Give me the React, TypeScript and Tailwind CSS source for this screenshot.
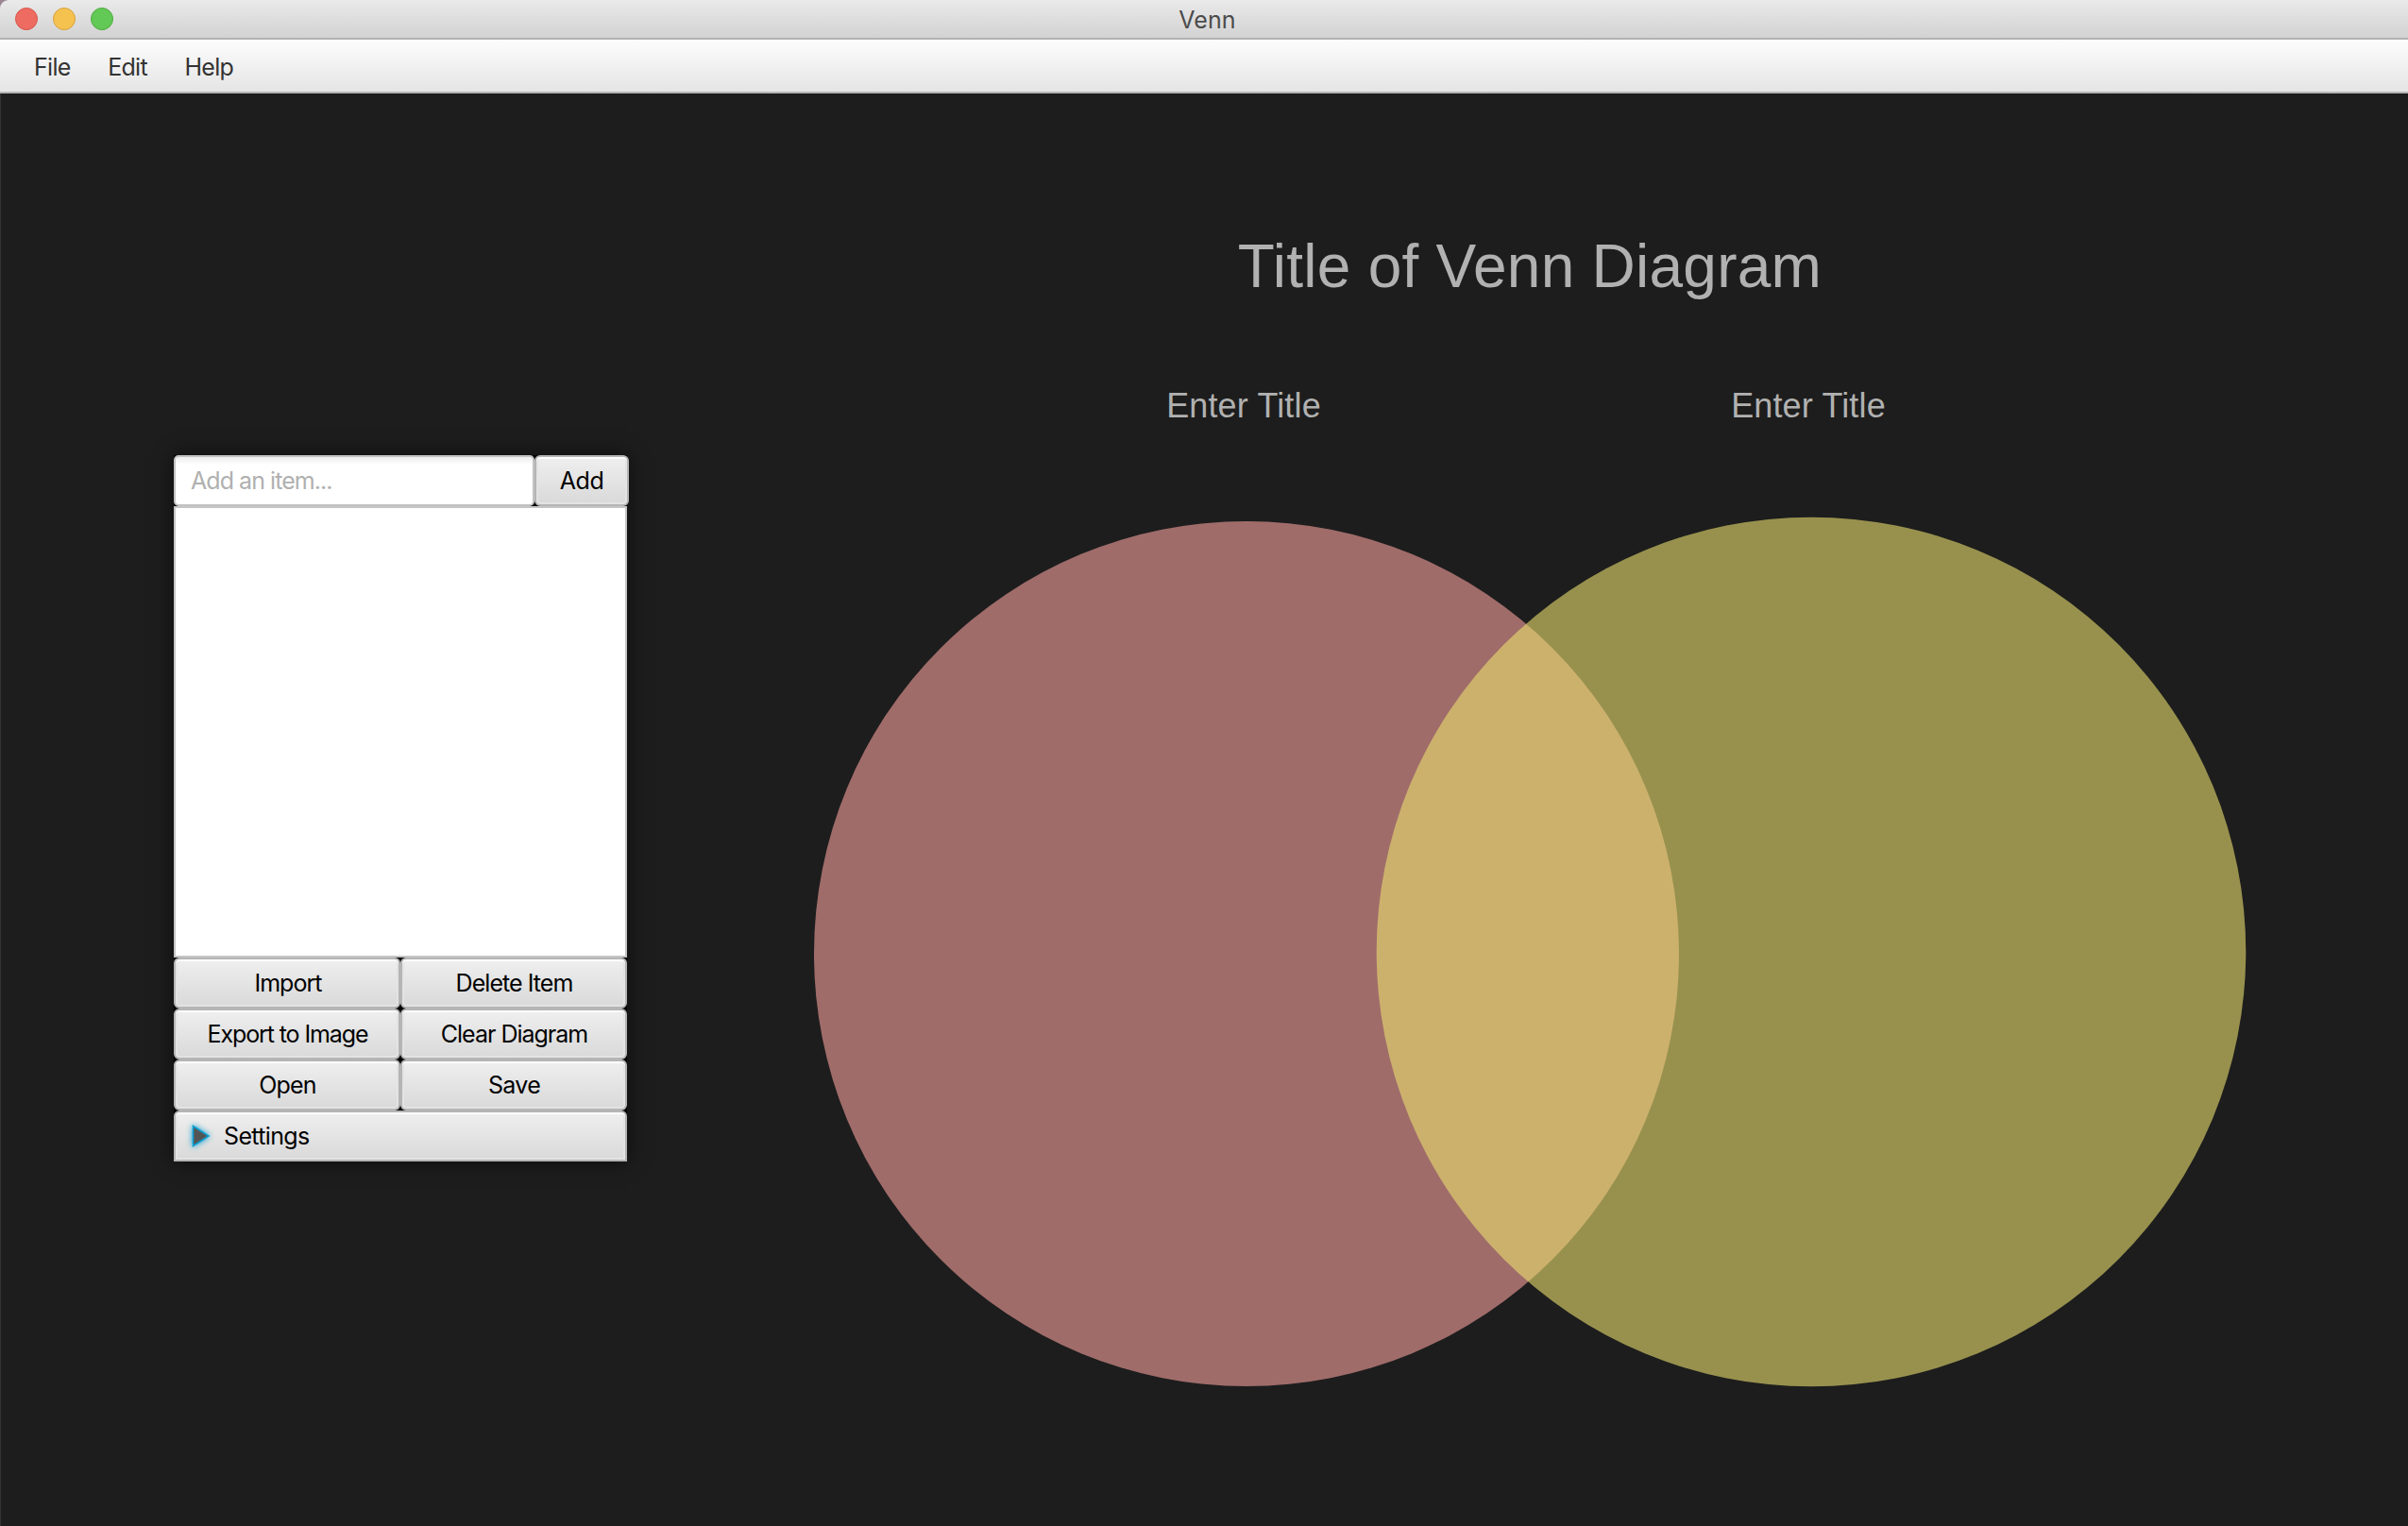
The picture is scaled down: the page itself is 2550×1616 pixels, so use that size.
import React from "react";

const BUTTONS: { label: string; text: string }[] = [
  { label: "Import", text: "pl-[2px] tracking-[-0.95px]" },
  { label: "Delete Item", text: "pl-[1px] tracking-[-0.95px]" },
  { label: "Export to Image", text: "pl-[1px] tracking-[-1.1px]" },
  { label: "Clear Diagram", text: "pl-[1px] tracking-[-1px]" },
  { label: "Open", text: "pl-[1px] tracking-[-0.8px]" },
  { label: "Save", text: "pl-[1px] tracking-[-0.7px]" },
];

const FACE =
  "border-2 border-[#b5b5b5] bg-linear-to-b from-[#efefef] to-[#d9d9d9] shadow-[inset_0_2px_0_#fdfdfd,inset_0_0_0_2px_#e3e3e3]";

function TitleBar() {
  return (
    <header className="relative flex h-[42px] shrink-0 items-center justify-center rounded-tl-[9px] border-b-2 border-[#b2b2b2] bg-linear-to-b from-[#eaeaea] to-[#d2d2d2]">
      <div className="absolute top-2 left-4 flex gap-4">
        <span className="size-6 rounded-full border border-[#d8564c] bg-[#ed6b60]" />
        <span className="size-6 rounded-full border border-[#d9a03c] bg-[#f5c250]" />
        <span className="size-6 rounded-full border border-[#4faa3f] bg-[#63c956]" />
      </div>
      <h1 className="mt-[2px] ml-[7px] text-[25px] leading-[40px] tracking-[0.1px] text-[#4b4b4b]">Venn</h1>
    </header>
  );
}

function MenuBar() {
  return (
    <nav className="flex h-[57px] shrink-0 items-center gap-[39.5px] border-b-2 border-[#b4b6b4] bg-linear-to-b from-[#fdfdfd] to-[#e5e5e5] pt-[5px] pl-9 text-[25px] tracking-[-0.7px] text-[#333]">
      <span>File</span>
      <span>Edit</span>
      <span>Help</span>
    </nav>
  );
}

function ItemPanel() {
  return (
    <aside className="mt-[383px] ml-[184px] h-[748px] w-[480px] shrink-0 bg-black text-[25px] text-black shadow-[0_0_20px_rgba(0,0,0,0.6)]">
      <div className="flex h-[54px] w-[482px]">
        <div className="flex w-[382px] items-center rounded-[5px] border-2 border-[#c2c2c2] bg-linear-to-b from-[#ececec] to-white to-[8px] pt-[2px] pl-4 tracking-[-0.95px] text-[#b0b0b0]">
          Add an item...
        </div>
        <div className={`flex w-[100px] items-center justify-center rounded-md pt-[2px] tracking-[-0.4px] ${FACE}`}>
          Add
        </div>
      </div>
      <div className="h-[478px] border-2 border-[#c5c5c5] bg-white" />
      <div className="grid grid-cols-2">
        {BUTTONS.map((b) => (
          <div
            key={b.label}
            className={`flex h-[54px] items-center justify-center rounded-md pt-[2px] ${FACE} ${b.text}`}
          >
            {b.label}
          </div>
        ))}
      </div>
      <div className={`flex h-[54px] items-center rounded-t-md pl-[17px] ${FACE}`}>
        <svg width="20" height="24" viewBox="0 0 20 24" className="overflow-visible drop-shadow-[0_0_3px_#039ed3]">
          <path d="M1.5 1.5 L18 12 L1.5 22.5 Z" fill="#555" stroke="#0c9fd2" strokeWidth="1.6" />
        </svg>
        <span className="mt-[2px] ml-[14px] tracking-[-0.65px]">Settings</span>
      </div>
    </aside>
  );
}

function Diagram() {
  return (
    <section className="ml-[198px] flex w-[1518px] flex-col font-['Liberation_Sans',sans-serif] text-[#b1b1b1]">
      <h2 className="mt-[146px] -ml-[2px] text-center text-[64px] leading-[74px] tracking-[0.25px]">
        Title of Venn Diagram
      </h2>
      <div className="mt-[90px] ml-[156px] grid w-[1196px] grid-cols-2 text-center text-[36px] leading-[42px] tracking-[0.15px]">
        <span>Enter Title</span>
        <span>Enter Title</span>
      </div>
      <svg className="mt-[96px] block" width="1518" height="922" viewBox="862 547 1518 922">
        <circle cx="1320" cy="1010" r="458" fill="#f7a19f" fillOpacity="0.6" />
        <circle cx="1918" cy="1008" r="460.3" fill="#ebe06f" fillOpacity="0.6" />
      </svg>
    </section>
  );
}

export default function App() {
  return (
    <div className="flex h-[1616px] w-[2550px] flex-col overflow-hidden bg-[#9b8794] font-[Inter,sans-serif]">
      <TitleBar />
      <MenuBar />
      <main className="flex flex-1 items-start bg-[#1d1d1d] shadow-[inset_1px_0_0_#343434]">
        <ItemPanel />
        <Diagram />
      </main>
    </div>
  );
}
